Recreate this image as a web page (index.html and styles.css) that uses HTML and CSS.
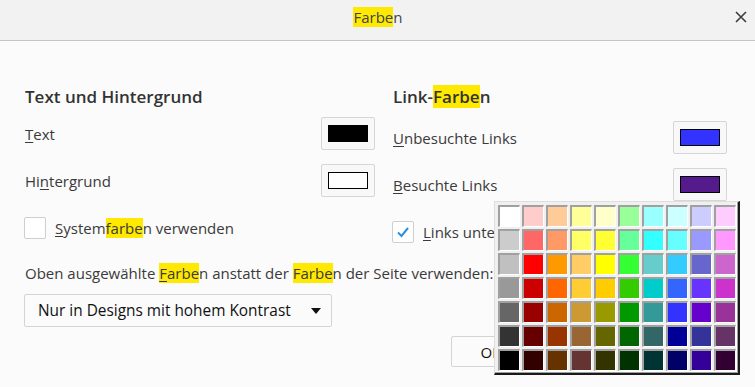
FILE: index.html
```html
<!DOCTYPE html>
<html lang="de">
<head>
  <meta charset="UTF-8">
  <meta name="viewport" content="width=device-width, initial-scale=1.0">
  <title>Farben</title>
  <link rel="stylesheet" href="styles.css">
</head>
<body>
  <div class="titlebar">
    <div class="title"><mark>Farbe</mark>n</div>
    <button class="close" aria-label="Schließen">
      <svg width="12" height="12" viewBox="0 0 12 12"><path d="M1 1 L11 11 M11 1 L1 11" stroke="#3d3d3d" stroke-width="1.6" fill="none"/></svg>
    </button>
  </div>

  <div class="content">
    <div class="columns">
      <div class="group">
        <h2 class="group-title">Text und Hintergrund</h2>
        <div class="rows">
          <div class="row">
            <span><u>T</u>ext</span>
            <button class="swatch-btn"><span class="swatch" style="background:#000000"></span></button>
          </div>
          <div class="row">
            <span>Hi<u>n</u>tergrund</span>
            <button class="swatch-btn"><span class="swatch" style="background:#ffffff"></span></button>
          </div>
          <div class="row">
            <label class="check"><span class="box"></span><span><u>S</u>ystem<mark>farbe</mark>n verwenden</span></label>
          </div>
        </div>
      </div>

      <div class="group links">
        <h2 class="group-title">Link-<mark>Farbe</mark>n</h2>
        <div class="rows">
          <div class="row">
            <span><u>U</u>nbesuchte Links</span>
            <button class="swatch-btn"><span class="swatch" style="background:#3333ff"></span></button>
          </div>
          <div class="row">
            <span><u>B</u>esuchte Links</span>
            <button class="swatch-btn"><span class="swatch" style="background:#551a8b"></span></button>
          </div>
          <div class="row">
            <label class="check"><span class="box checked">
              <svg width="14" height="12" viewBox="0 0 14 12"><path d="M2 6.5 L5.5 10 L12 2" stroke="#2a8fe0" stroke-width="2" fill="none"/></svg>
            </span><span><u>L</u>inks unterstreichen</span></label>
          </div>
        </div>
      </div>
    </div>

    <p class="override">Oben ausgewählte <u><mark>F</mark></u><mark>arbe</mark>n anstatt der <mark>Farbe</mark>n der Seite verwenden:</p>

    <button class="dropdown">
      <span>Nur in Designs mit hohem Kontrast</span>
      <span class="arrow"></span>
    </button>

    <div class="actions">
      <button class="action ok">OK</button>
      <button class="action">Abbrechen</button>
    </div>
  </div>

  <div class="palette" id="palette"></div>

  <script>
    const colors = [
      "#FFFFFF", "#FFCCCC", "#FFCC99", "#FFFF99", "#FFFFCC", "#99FF99", "#99FFFF", "#CCFFFF", "#CCCCFF", "#FFCCFF",
      "#CCCCCC", "#FF6666", "#FF9966", "#FFFF66", "#FFFF33", "#66FF99", "#33FFFF", "#66FFFF", "#9999FF", "#FF99FF",
      "#C0C0C0", "#FF0000", "#FF9900", "#FFCC66", "#FFFF00", "#33FF33", "#66CCCC", "#33CCFF", "#6666CC", "#CC66CC",
      "#999999", "#CC0000", "#FF6600", "#FFCC33", "#FFCC00", "#33CC00", "#00CCCC", "#3366FF", "#6633FF", "#CC33CC",
      "#666666", "#990000", "#CC6600", "#CC9933", "#999900", "#009900", "#339999", "#3333FF", "#6600CC", "#993399",
      "#333333", "#660000", "#993300", "#996633", "#666600", "#006600", "#336666", "#000099", "#333399", "#663366",
      "#000000", "#330000", "#663300", "#663333", "#333300", "#003300", "#003333", "#000066", "#330099", "#330033"
    ];

    const palette = document.getElementById("palette");
    colors.forEach(color => {
      const cell = document.createElement("span");
      cell.className = "cell";
      cell.style.background = color;
      palette.appendChild(cell);
    });
  </script>
</body>
</html>
```

FILE: styles.css
```css
body {
  margin: 0;
  font-family: "Open Sans", "Noto Sans", sans-serif;
  font-size: 15px;
  color: #3a3a3a;
  background-color: #fbfbfb;
  width: 755px;
  height: 387px;
  overflow: hidden;
}

mark {
  background-color: #ffe900;
  color: inherit;
}

u {
  text-decoration-thickness: 1px;
  text-underline-offset: 2px;
}

button {
  font-family: inherit;
  font-size: inherit;
  color: inherit;
}

.titlebar {
  height: 40px;
  background-color: #f2f2f2;
  border-bottom: 1px solid #c4c4c4;
  display: flex;
  align-items: center;
  justify-content: center;
  position: relative;
}

.title {
  font-size: 15px;
  line-height: 23px;
  color: #3d4450;
  margin-top: -6px;
  margin-left: 1px;
}

.close {
  position: absolute;
  right: 6px;
  top: 9px;
  border: 0;
  background: none;
  padding: 2px;
  display: flex;
}

.content {
  padding: 44px 28px 0 25px;
}

.columns {
  display: grid;
  grid-template-columns: 350px 334px;
  gap: 18px;
}

.group-title {
  margin: 0;
  font-size: 17px;
  line-height: 24px;
  font-weight: 600;
  color: #333;
}

.rows {
  display: flex;
  flex-direction: column;
  gap: 14px;
  margin-top: 8px;
}

.links .rows {
  margin-top: 12px;
}

.row {
  height: 33px;
  display: flex;
  align-items: center;
  justify-content: space-between;
}

.swatch-btn {
  width: 54px;
  height: 33px;
  border: 1px solid #d6d6d6;
  border-radius: 2px;
  background-color: #f8f8f8;
  padding: 0;
  display: flex;
  align-items: center;
  justify-content: center;
}

.swatch {
  width: 38px;
  height: 15px;
  border: 1px solid #000;
}

.check {
  display: flex;
  align-items: center;
  gap: 9px;
  margin-left: -1px;
}

.box {
  width: 20px;
  height: 20px;
  border: 1px solid #cfcfcf;
  border-radius: 2px;
  background-color: #fff;
  display: flex;
  align-items: center;
  justify-content: center;
}

.override {
  margin: 14px 0 0;
  line-height: 23px;
}

.dropdown {
  margin-top: 9px;
  width: 308px;
  height: 33px;
  border: 1px solid #d4d4d4;
  border-radius: 2px;
  background-color: #fbfbfb;
  color: #111;
  font-size: 15.4px;
  padding: 0 10px 0 13px;
  margin-left: -1px;
  display: flex;
  align-items: center;
  justify-content: space-between;
}

.arrow {
  width: 0;
  height: 0;
  border-left: 5px solid transparent;
  border-right: 5px solid transparent;
  border-top: 6px solid #111;
}

.actions {
  margin-top: 9px;
  display: flex;
  justify-content: flex-end;
  gap: 8px;
}

.action {
  width: 188px;
  height: 31px;
  border: 1px solid #d4d4d4;
  border-radius: 2px;
  background-color: #fbfbfb;
  color: #111;
}

.action.ok {
  width: 80px;
}

.palette {
  position: absolute;
  left: 494px;
  top: 201px;
  width: 240px;
  height: 168px;
  padding: 3px 0 0 3px;
  display: grid;
  grid-template-columns: repeat(10, 22px);
  grid-auto-rows: 22px;
  gap: 2px;
  background-color: #f0f0f0;
  border-top: 1px solid #dedede;
  border-left: 1px solid #dedede;
  border-right: 2px solid #1a1a1a;
  border-bottom: 2px solid #1a1a1a;
  box-shadow: inset -1px -1px 0 #a0a0a0, inset -2px -2px 0 #ffffff;
}

.cell {
  box-sizing: border-box;
  border-top: 2px solid #a0a0a0;
  border-left: 2px solid #a0a0a0;
  border-right: 1px solid #ffffff;
  border-bottom: 1px solid #ffffff;
}
```
